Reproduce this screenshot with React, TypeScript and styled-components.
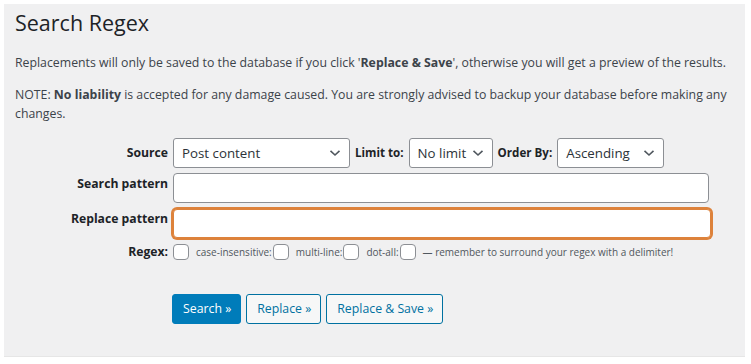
import React from "react";
import styled, { createGlobalStyle } from "styled-components";

const Global = createGlobalStyle`
  html, body { margin: 0; padding: 0; background: #fff; }
  body { font-family: "Open Sans", "Noto Sans", sans-serif; color: #3c434a; }
  * { box-sizing: border-box; }
`;

const Page = styled.div`
  padding: 4px 6px 7px 4px;
  width: 751px;
  height: 364px;
`;

const Panel = styled.div`
  background: #f0f0f1;
  height: 100%;
  padding: 4px 11px 0 11px;
  border-bottom: 1px solid #e6e6e6;
`;

const Title = styled.h1`
  margin: 0;
  font-size: 21.5px;
  font-weight: 400;
  line-height: 29px;
  color: #1d2327;
`;

const Para = styled.p`
  margin: 0;
  font-size: 12.3px;
  line-height: 19.5px;
  color: #3c434a;
  & + & { margin-top: 12px; }
  &:first-of-type { margin-top: 16px; }
`;

const Strong = styled.strong`
  font-weight: 700;
`;

const Form = styled.div`
  margin-top: 14px;
  display: grid;
  grid-template-columns: 153px 1fr;
  column-gap: 5px;
  row-gap: 5px;
`;

const Label = styled.div<{ $top?: boolean }>`
  font-size: 12.2px;
  font-weight: 700;
  text-align: right;
  color: #1d2327;
  align-self: ${(p) => (p.$top ? "start" : "center")};
  padding-top: ${(p) => (p.$top ? "2px" : "0")};
  line-height: 18px;
`;

const Inline = styled.div`
  display: flex;
  align-items: center;
  gap: 5px;
`;

const InlineLabel = styled.span`
  font-size: 11.6px;
  font-weight: 700;
  color: #1d2327;
`;

const SelectBox = styled.div<{ $w: number }>`
  width: ${(p) => p.$w}px;
  height: 30px;
  border: 1px solid #8c8f94;
  border-radius: 3px;
  background: #fff;
  display: flex;
  align-items: center;
  justify-content: space-between;
  padding: 0 8px 0 8px;
  font-size: 13.3px;
  color: #2c3338;
`;

const TextInput = styled.div<{ $focus?: boolean }>`
  width: ${(p) => (p.$focus ? "538px" : "536px")};
  height: ${(p) => (p.$focus ? "29px" : "30px")};
  background: #fff;
  border: 1px solid ${(p) => (p.$focus ? "#dd823b" : "#8c8f94")};
  border-radius: 4px;
  box-shadow: ${(p) => (p.$focus ? "0 0 0 2px #dd823b" : "none")};
  margin-top: ${(p) => (p.$focus ? "1px" : "0")};
`;

const RegexRow = styled.div`
  display: flex;
  align-items: center;
  font-size: 10px;
  color: #50575e;
`;

const Check = styled.span`
  width: 16px;
  height: 16px;
  border: 1px solid #8c8f94;
  border-radius: 4px;
  background: #fff;
  display: inline-block;
  margin-right: 7px;
`;

const SmallLabel = styled.span`
  margin-right: 1px;
`;

const Buttons = styled.div`
  grid-column: 2;
  display: flex;
  gap: 5px;
  margin-top: 28px;
  margin-left: -1px;
`;

const Button = styled.div<{ $primary?: boolean }>`
  height: 30px;
  padding: 0 9px 0 10px;
  display: flex;
  align-items: center;
  border-radius: 3px;
  font-size: 12.3px;
  border: 1px solid ${(p) => (p.$primary ? "#007cba" : "#0071a1")};
  background: ${(p) => (p.$primary ? "#007cba" : "#f6f7f7")};
  color: ${(p) => (p.$primary ? "#fff" : "#0071a1")};
`;

const Chevron = () => (
  <svg width="12" height="8" viewBox="0 0 12 8" fill="none">
    <path d="M1.5 1.8 L6 6 L10.5 1.8" stroke="#50575e" strokeWidth="1.6" />
  </svg>
);

export default function App() {
  return (
    <>
      <Global />
      <Page>
        <Panel>
          <Title>Search Regex</Title>
          <Para>
            Replacements will only be saved to the database if you click '<Strong>Replace &amp; Save</Strong>', otherwise you will get a preview of the results.
          </Para>
          <Para>
            NOTE: <Strong>No liability</Strong> is accepted for any damage caused. You are strongly advised to backup your database before making any changes.
          </Para>
          <Form>
            <Label>Source</Label>
            <Inline>
              <SelectBox $w={177}>
                <span>Post content</span>
                <Chevron />
              </SelectBox>
              <InlineLabel>Limit to:</InlineLabel>
              <SelectBox $w={84}>
                <span>No limit</span>
                <Chevron />
              </SelectBox>
              <InlineLabel>Order By:</InlineLabel>
              <SelectBox $w={107}>
                <span>Ascending</span>
                <Chevron />
              </SelectBox>
            </Inline>
            <Label $top>Search pattern</Label>
            <TextInput />
            <Label $top>Replace pattern</Label>
            <TextInput $focus />
            <Label>Regex:</Label>
            <RegexRow>
              <Check />
              <SmallLabel>case-insensitive:</SmallLabel>
              <Check />
              <SmallLabel>multi-line:</SmallLabel>
              <Check />
              <SmallLabel>dot-all:</SmallLabel>
              <Check />
              <span>— remember to surround your regex with a delimiter!</span>
            </RegexRow>
            <Buttons>
              <Button $primary>Search »</Button>
              <Button>Replace »</Button>
              <Button>Replace &amp; Save »</Button>
            </Buttons>
          </Form>
        </Panel>
      </Page>
    </>
  );
}
